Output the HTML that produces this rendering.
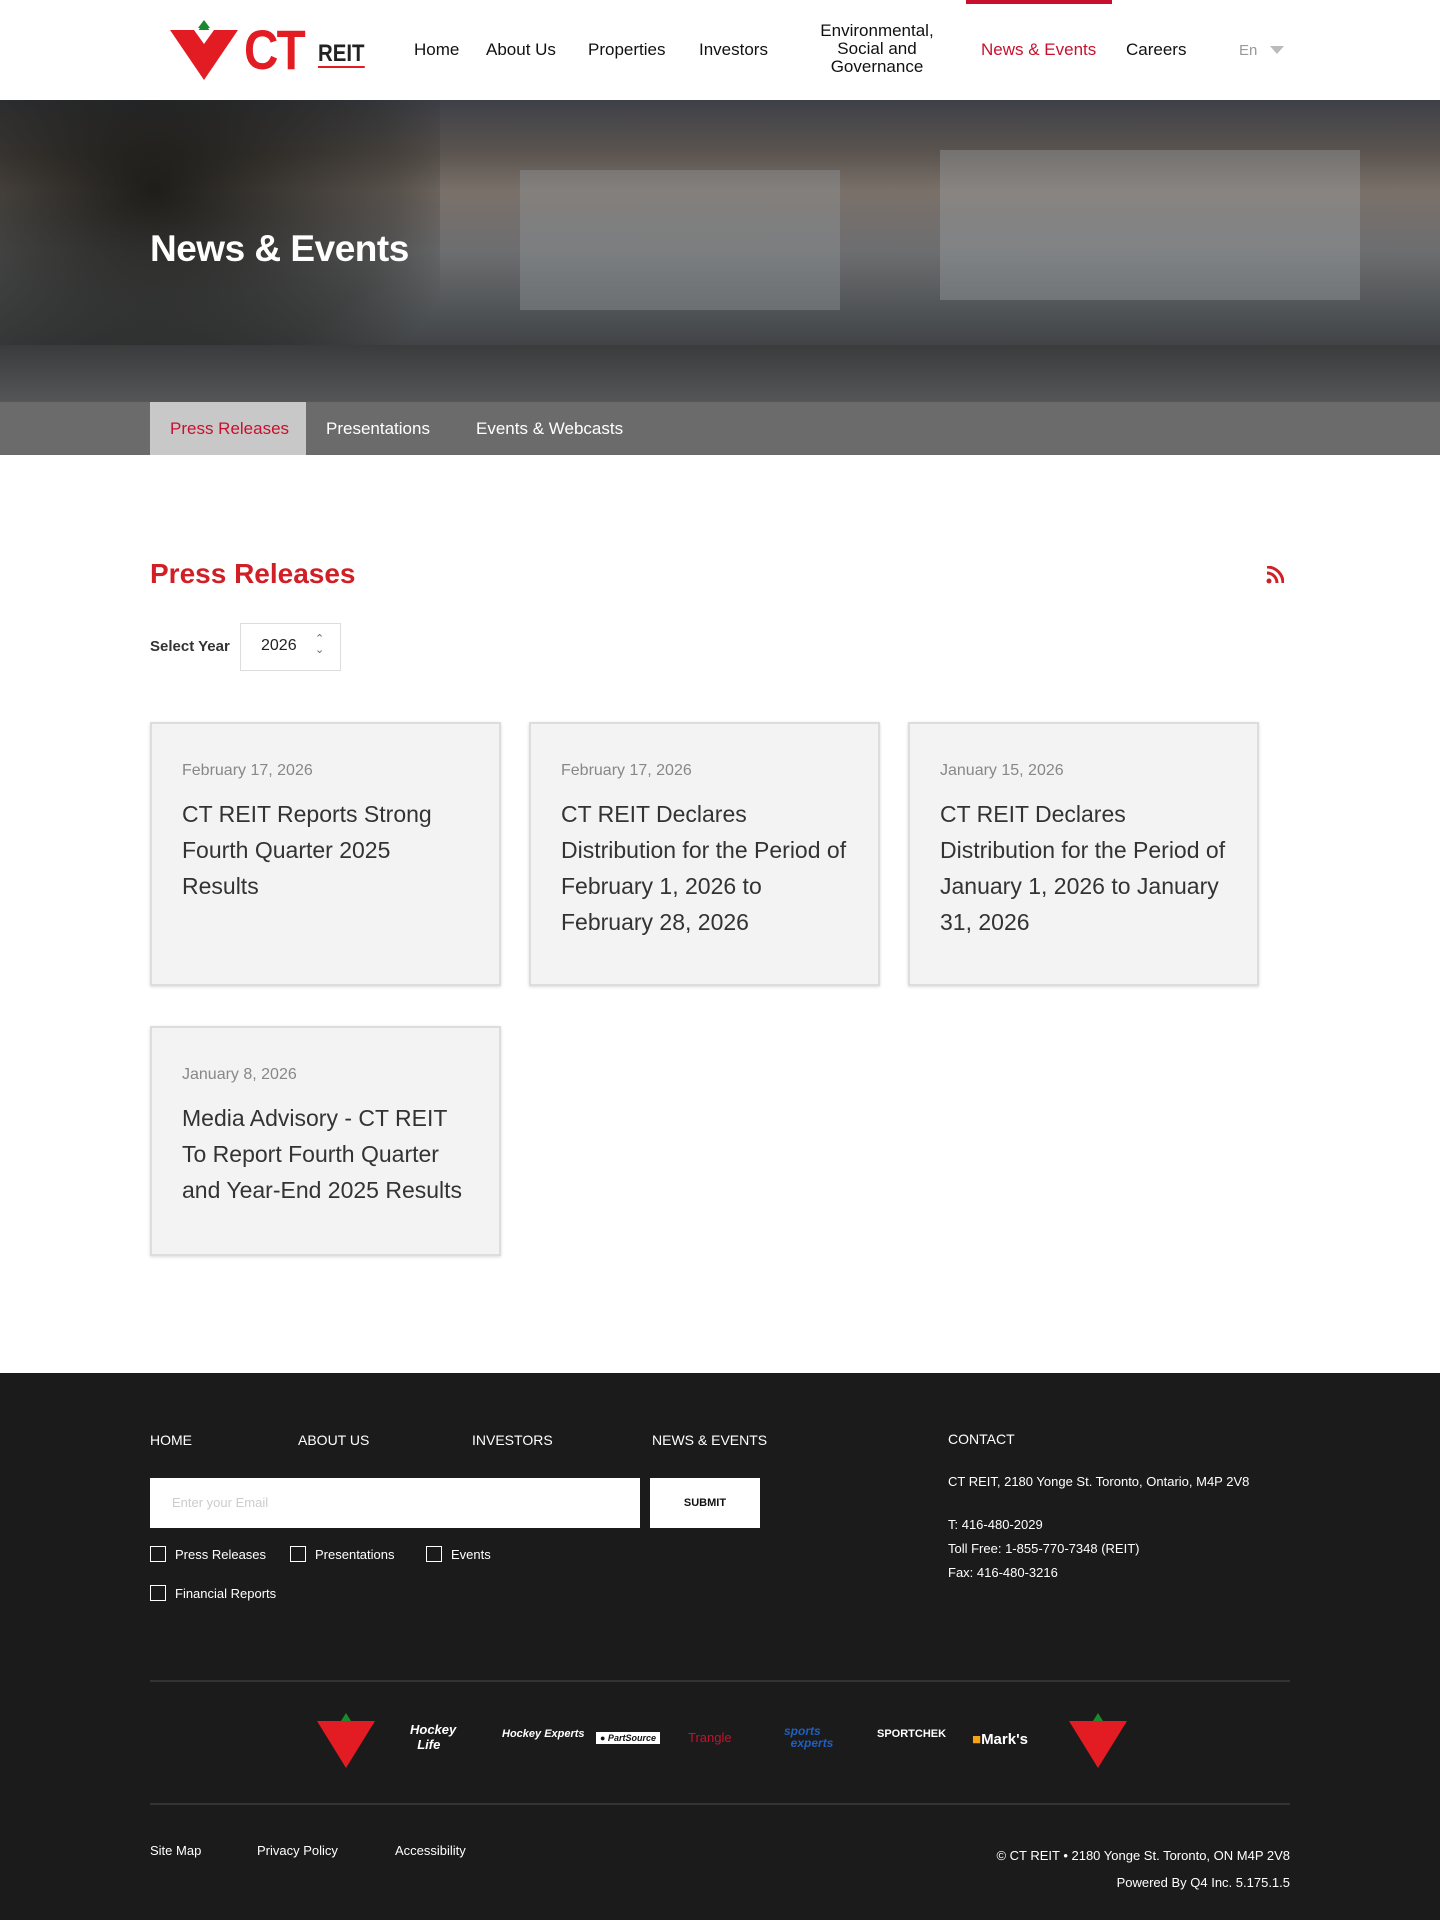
<!DOCTYPE html>
<html><head><meta charset="utf-8">
<style>
*{margin:0;padding:0;box-sizing:border-box}
body{width:1440px;height:1920px;font-family:"Liberation Sans",sans-serif;background:#fff;position:relative;overflow:hidden;color:#222}
.a{position:absolute}
.nav{font-size:17px;color:#111;top:40px;white-space:nowrap}
.card{position:absolute;background:#f3f3f3;border:2px solid #ddd;box-shadow:0 1px 3px rgba(0,0,0,.15);width:351px}
.card .d{position:absolute;left:30px;top:38px;font-size:16px;color:#888}
.card .t{position:absolute;left:30px;top:72px;width:286px;font-size:23px;line-height:36px;color:#333}
.f{color:#fff;font-size:14px;position:absolute;white-space:nowrap}
.cb{display:inline-block;width:16px;height:16px;border:1.5px solid #fff;vertical-align:-3px;margin-right:9px}
.logo{position:absolute;top:1717px;font-size:13px;font-weight:bold;font-style:italic;color:#fff}
</style></head><body>
<div class="a" style="left:0;top:0;width:1440px;height:100px;background:#fff"></div>
<svg class="a" style="left:168px;top:18px" width="72" height="64" viewBox="0 0 72 64"><polygon points="2,12 70,12 36,62" fill="#e31b23"/><polygon points="36,2 42,10 40,10 44,16 38,15 36,20 34,15 28,16 32,10 30,10" fill="#1a8a2c"/><polygon points="26,12 46,12 36,26" fill="#fff"/></svg>
<div class="a" style="left:244px;top:20px;font-size:56px;font-weight:bold;color:#e31b23;line-height:60px;letter-spacing:-2px;transform:scaleX(.85);transform-origin:left">CT</div>
<div class="a" style="left:318px;top:42px;font-size:24px;font-weight:bold;color:#222;border-bottom:2px solid #e31b23;line-height:24px;transform:scaleX(.85);transform-origin:left">REIT</div>
<div class="a nav" style="left:414px">Home</div>
<div class="a nav" style="left:486px">About Us</div>
<div class="a nav" style="left:588px">Properties</div>
<div class="a nav" style="left:699px">Investors</div>
<div class="a nav" style="left:800px;top:22px;width:154px;text-align:center;line-height:18px">Environmental,<br>Social and<br>Governance</div>
<div class="a" style="left:966px;top:0;width:146px;height:4px;background:#c8102e"></div>
<div class="a nav" style="left:981px;color:#c8102e">News &amp; Events</div>
<div class="a nav" style="left:1126px">Careers</div>
<div class="a nav" style="left:1239px;color:#999;font-size:15px;top:42px">En</div>
<div class="a" style="left:1270px;top:46px;width:0;height:0;border-left:7px solid transparent;border-right:7px solid transparent;border-top:8px solid #bbb"></div>
<div class="a" style="left:0;top:100px;width:1440px;height:302px;background:linear-gradient(180deg,#3e4048 0%,#5c5550 18%,#7a706a 30%,#6d6e70 50%,#505356 70%,#3c3e40 85%,#4a4b4c 100%)"></div>
<div class="a" style="left:520px;top:170px;width:320px;height:140px;background:#8f9294;opacity:.45"></div>
<div class="a" style="left:940px;top:150px;width:420px;height:150px;background:#9ea2a5;opacity:.4"></div>
<div class="a" style="left:0;top:100px;width:440px;height:302px;background:radial-gradient(ellipse at 35% 30%,rgba(15,15,12,.85),rgba(25,25,20,.35) 60%,transparent 80%)"></div>
<div class="a" style="left:0;top:345px;width:1440px;height:57px;background:linear-gradient(180deg,#3a3b3c,#555657)"></div>
<div class="a" style="left:150px;top:228px;font-size:37px;font-weight:bold;color:#fff;letter-spacing:-.5px">News &amp; Events</div>
<div class="a" style="left:0;top:402px;width:1440px;height:53px;background:#6b6b6b"></div>
<div class="a" style="left:150px;top:402px;width:156px;height:53px;background:#c8c8c8"></div>
<div class="a" style="left:170px;top:419px;font-size:17px;color:#c8102e">Press Releases</div>
<div class="a" style="left:326px;top:419px;font-size:17px;color:#fff">Presentations</div>
<div class="a" style="left:476px;top:419px;font-size:17px;color:#fff">Events &amp; Webcasts</div>
<div class="a" style="left:150px;top:558px;font-size:28px;font-weight:bold;color:#d11f26">Press Releases</div>
<svg class="a" style="left:1266px;top:566px" width="18" height="18" viewBox="0 0 18 18"><circle cx="3" cy="15" r="2.5" fill="#d11f26"/><path d="M1 7a10 10 0 0 1 10 10" stroke="#d11f26" stroke-width="3" fill="none"/><path d="M1 1a16 16 0 0 1 16 16" stroke="#d11f26" stroke-width="3" fill="none"/></svg>
<div class="a" style="left:150px;top:638px;font-size:15px;font-weight:bold;color:#333">Select Year</div>
<div class="a" style="left:240px;top:623px;width:101px;height:48px;border:1px solid #ddd"></div>
<div class="a" style="left:261px;top:637px;font-size:16px;color:#222">2026</div>
<div class="a" style="left:315px;top:634px;font-size:11px;color:#666;line-height:11px">⌃<br>⌄</div>
<div class="card" style="left:150px;top:722px;height:264px"><div class="d">February 17, 2026</div><div class="t">CT REIT Reports Strong Fourth Quarter 2025 Results</div></div>
<div class="card" style="left:529px;top:722px;height:264px"><div class="d">February 17, 2026</div><div class="t">CT REIT Declares Distribution for the Period of February 1, 2026 to February 28, 2026</div></div>
<div class="card" style="left:908px;top:722px;height:264px"><div class="d">January 15, 2026</div><div class="t">CT REIT Declares Distribution for the Period of January 1, 2026 to January 31, 2026</div></div>
<div class="card" style="left:150px;top:1026px;height:230px"><div class="d">January 8, 2026</div><div class="t" style="width:295px">Media Advisory - CT REIT To Report Fourth Quarter and Year-End 2025 Results</div></div>
<div class="a" style="left:0;top:1373px;width:1440px;height:547px;background:#1b1b1b"></div>
<div class="f" style="left:150px;top:1432px">HOME</div>
<div class="f" style="left:298px;top:1432px">ABOUT US</div>
<div class="f" style="left:472px;top:1432px">INVESTORS</div>
<div class="f" style="left:652px;top:1432px">NEWS &amp; EVENTS</div>
<div class="a" style="left:150px;top:1478px;width:490px;height:50px;background:#fff"></div>
<div class="a" style="left:172px;top:1495px;font-size:13px;color:#ccc">Enter your Email</div>
<div class="a" style="left:650px;top:1478px;width:110px;height:50px;background:#fff;font-size:11px;font-weight:bold;text-align:center;line-height:50px;color:#111">SUBMIT</div>
<div class="f" style="left:150px;top:1546px;font-size:13px"><span class="cb"></span>Press Releases</div>
<div class="f" style="left:290px;top:1546px;font-size:13px"><span class="cb"></span>Presentations</div>
<div class="f" style="left:426px;top:1546px;font-size:13px"><span class="cb"></span>Events</div>
<div class="f" style="left:150px;top:1585px;font-size:13px"><span class="cb"></span>Financial Reports</div>
<div class="f" style="left:948px;top:1431px">CONTACT</div>
<div class="f" style="left:948px;top:1474px;font-size:13px">CT REIT, 2180 Yonge St. Toronto, Ontario, M4P 2V8</div>
<div class="f" style="left:948px;top:1517px;font-size:13px">T: 416-480-2029</div>
<div class="f" style="left:948px;top:1541px;font-size:13px">Toll Free: 1-855-770-7348 (REIT)</div>
<div class="f" style="left:948px;top:1565px;font-size:13px">Fax: 416-480-3216</div>
<div class="a" style="left:150px;top:1680px;width:1140px;height:2px;background:#333"></div>
<div class="a" style="left:150px;top:1803px;width:1140px;height:2px;background:#333"></div>
<svg class="a" style="left:316px;top:1713px" width="60" height="56" viewBox="0 0 60 56"><polygon points="1,8 59,8 30,55" fill="#e31b23"/><polygon points="30,0 35,8 25,8" fill="#1a8a2c"/></svg>
<div class="logo" style="left:410px;top:1722px">Hockey<br>&nbsp;&nbsp;Life</div>
<div class="logo" style="left:502px;top:1728px;font-size:11px">Hockey Experts</div>
<div class="logo" style="left:596px;top:1732px;font-size:9px;background:#fff;color:#111;padding:1px 4px">● PartSource</div>
<div class="logo" style="left:688px;top:1730px;color:#c8102e;font-style:normal;font-weight:normal">Trangle</div>
<div class="logo" style="left:784px;top:1725px;color:#1f5fbf;font-size:12px;line-height:12px">sports<br>&nbsp;&nbsp;experts</div>
<div class="logo" style="left:877px;top:1728px;font-size:11px;font-style:normal">SPORTCHEK</div>
<div class="logo" style="left:972px;top:1731px;font-style:normal;font-size:15px"><span style="color:#f7a21b">■</span>Mark's</div>
<svg class="a" style="left:1068px;top:1713px" width="60" height="56" viewBox="0 0 60 56"><polygon points="1,8 59,8 30,55" fill="#e31b23"/><polygon points="30,0 35,8 25,8" fill="#1a8a2c"/></svg>
<div class="f" style="left:150px;top:1843px;font-size:13px">Site Map</div>
<div class="f" style="left:257px;top:1843px;font-size:13px">Privacy Policy</div>
<div class="f" style="left:395px;top:1843px;font-size:13px">Accessibility</div>
<div class="f" style="right:150px;top:1848px;font-size:13px">© CT REIT • 2180 Yonge St. Toronto, ON M4P 2V8</div>
<div class="f" style="right:150px;top:1875px;font-size:13px">Powered By Q4 Inc. 5.175.1.5</div>
</body></html>
